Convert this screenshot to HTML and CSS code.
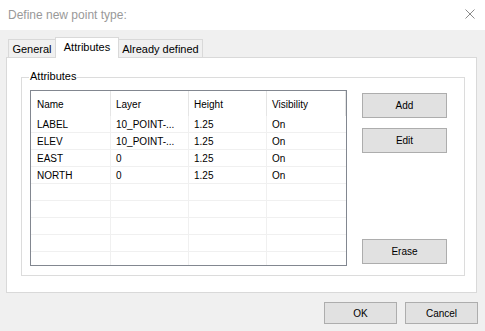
FILE: index.html
```html
<!DOCTYPE html>
<html lang="en">
<head>
    <meta charset="UTF-8">
    <title>Define new point type</title>
    <link rel="stylesheet" href="styles.css">
</head>
<body>

    <div class="titlebar">
        <span class="title">Define new point type:</span>
        <svg class="close" width="10" height="10" viewBox="0 0 10 10">
            <path d="M0.5 0.5 L9.5 9.5 M9.5 0.5 L0.5 9.5" stroke="#8a8a8a" stroke-width="1" fill="none"/>
        </svg>
    </div>

    <div class="dialog">
        <div class="tabs">
            <div class="tab tab-first">General</div>
            <div class="tab tab-active">Attributes</div>
            <div class="tab tab-last">Already defined</div>
        </div>

        <div class="panel">
            <div class="group">
                <span class="group-title">Attributes</span>
                <div class="group-body">
                    <div class="list">
                        <div class="list-head">
                            <div class="cell">Name</div>
                            <div class="cell">Layer</div>
                            <div class="cell">Height</div>
                            <div class="cell">Visibility</div>
                        </div>
                        <div class="list-row">
                            <div class="cell">LABEL</div>
                            <div class="cell">10_POINT-...</div>
                            <div class="cell">1.25</div>
                            <div class="cell">On</div>
                        </div>
                        <div class="list-row">
                            <div class="cell">ELEV</div>
                            <div class="cell">10_POINT-...</div>
                            <div class="cell">1.25</div>
                            <div class="cell">On</div>
                        </div>
                        <div class="list-row">
                            <div class="cell">EAST</div>
                            <div class="cell">0</div>
                            <div class="cell">1.25</div>
                            <div class="cell">On</div>
                        </div>
                        <div class="list-row">
                            <div class="cell">NORTH</div>
                            <div class="cell">0</div>
                            <div class="cell">1.25</div>
                            <div class="cell">On</div>
                        </div>
                        <!-- пустые строки сетки -->
                        <div class="list-row"><div class="cell"></div><div class="cell"></div><div class="cell"></div><div class="cell"></div></div>
                        <div class="list-row"><div class="cell"></div><div class="cell"></div><div class="cell"></div><div class="cell"></div></div>
                        <div class="list-row"><div class="cell"></div><div class="cell"></div><div class="cell"></div><div class="cell"></div></div>
                        <div class="list-row"><div class="cell"></div><div class="cell"></div><div class="cell"></div><div class="cell"></div></div>
                        <div class="list-row"><div class="cell"></div><div class="cell"></div><div class="cell"></div><div class="cell"></div></div>
                    </div>

                    <div class="side-buttons">
                        <button class="btn">Add</button>
                        <button class="btn">Edit</button>
                        <button class="btn btn-erase">Erase</button>
                    </div>
                </div>
            </div>
        </div>

        <div class="footer">
            <button class="btn btn-footer">OK</button>
            <button class="btn btn-footer">Cancel</button>
        </div>
    </div>

</body>
</html>
```

FILE: styles.css
```css
* {
    box-sizing: border-box;
}

body {
    margin: 0;
    width: 485px;
    height: 331px;
    overflow: hidden;
    background-color: #f0f0f0;
    font-family: "Liberation Sans", Arial, sans-serif;
    color: #000;
}

.titlebar {
    height: 30px;
    background-color: #fff;
    display: flex;
    align-items: center;
    justify-content: space-between;
    padding: 0 10px 1px 8px;
}

.title {
    font-size: 12px;
    color: #999;
}

.close {
    display: block;
    margin-top: -1px;
}

.dialog {
    padding: 7px 8px 0 6px;
}

/* вкладки */
.tabs {
    display: flex;
    align-items: flex-end;
    height: 20px;
    margin-left: 2px;
}

.tab {
    height: 18px;
    display: flex;
    align-items: center;
    justify-content: center;
    font-size: 11px;
    background-color: #f0f0f0;
    border-top: 1px solid #d9d9d9;
}

.tab-first {
    width: 47px;
    border-left: 1px solid #d9d9d9;
}

.tab-active {
    width: 64px;
    height: 21px;
    margin-bottom: -1px;
    padding-bottom: 3px;
    background-color: #fff;
    border-left: 1px solid #d9d9d9;
    border-right: 1px solid #d9d9d9;
    position: relative;
    z-index: 1;
}

.tab-last {
    width: 84px;
    border-right: 1px solid #d9d9d9;
}

.panel {
    height: 236px;
    background-color: #fff;
    border: 1px solid #d9d9d9;
    padding: 19px 11px 0 14px;
}

/* рамка группы */
.group {
    height: 199px;
    border: 1px solid #dcdcdc;
}

.group-title {
    display: block;
    width: fit-content;
    margin: -8px 0 7px 7px;
    padding: 0 1px;
    background-color: #fff;
    font-size: 11px;
    line-height: 13px;
}

.group-body {
    display: flex;
    padding-left: 8px;
}

.list {
    width: 317px;
    height: 176px;
    border: 1px solid #828790;
    background-color: #fff;
    overflow: hidden;
    font-size: 10px;
}

.list-head,
.list-row {
    display: grid;
    grid-template-columns: 80px 78px 78px 79px;
}

.list-head {
    height: 25px;
    line-height: 27px;
}

.list-head .cell {
    border-right: 1px solid #e5e5e5;
}

.list-row {
    height: 17px;
    line-height: 18px;
    border-bottom: 1px solid #f0f0f0;
}

.list-row .cell {
    border-right: 1px solid #f0f0f0;
}

.list-row .cell:last-child {
    border-right: none;
}

.cell {
    padding-left: 5px;
    white-space: nowrap;
    overflow: hidden;
}

.cell:first-child {
    padding-left: 6px;
}

.side-buttons {
    display: flex;
    flex-direction: column;
    gap: 10px;
    width: 85px;
    margin-left: 15px;
    padding: 3px 0 2px 0;
}

.btn {
    height: 25px;
    padding: 0;
    background-color: #e1e1e1;
    border: 1px solid #adadad;
    font-family: "Liberation Sans", Arial, sans-serif;
    font-size: 10px;
    color: #000;
}

.btn-erase {
    margin-top: auto;
}

.footer {
    display: flex;
    justify-content: flex-end;
    gap: 8px;
    margin: 9px -1px 0 0;
}

.btn-footer {
    width: 73px;
    height: 22px;
}
```
